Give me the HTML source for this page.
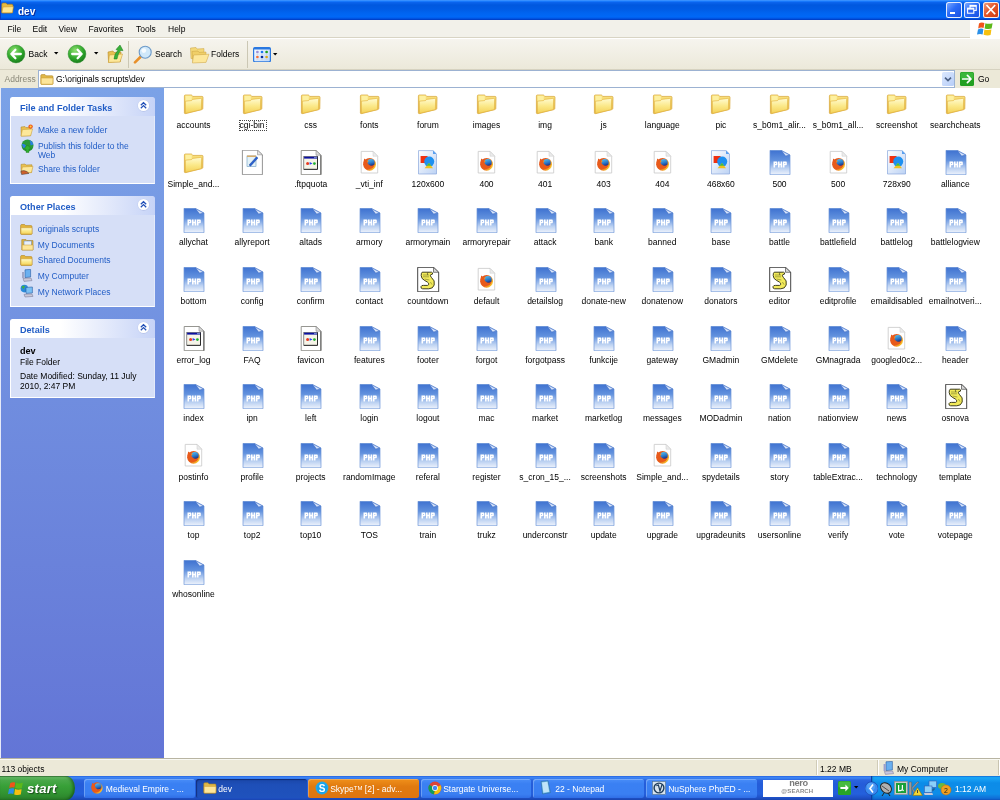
<!DOCTYPE html><html><head><meta charset="utf-8"><style>
html,body{margin:0;padding:0;width:1000px;height:800px;overflow:hidden;background:#fff;position:relative}
#w{position:absolute;left:0;top:0;width:1000px;height:800px;will-change:transform}
body{font-family:"Liberation Sans",sans-serif}
.t{position:absolute;white-space:nowrap;line-height:1}
.b{position:absolute}
</style></head><body><div id="w">
<svg width="0" height="0" style="position:absolute">
<defs>
<linearGradient id="gFold" x1="0" y1="0" x2="0" y2="1"><stop offset="0" stop-color="#fffbd2"/><stop offset="0.5" stop-color="#fbe98a"/><stop offset="1" stop-color="#f4d258"/></linearGradient>
<linearGradient id="gFoldB" x1="0" y1="0" x2="0" y2="1"><stop offset="0" stop-color="#fae480"/><stop offset="1" stop-color="#e8bc48"/></linearGradient>
<linearGradient id="gPhp" x1="0" y1="0" x2="0" y2="1"><stop offset="0" stop-color="#3f72d0"/><stop offset="0.4" stop-color="#6191de"/><stop offset="0.75" stop-color="#bdd2f2"/><stop offset="1" stop-color="#eef3fc"/></linearGradient>
<linearGradient id="gImg" x1="0" y1="0" x2="1" y2="1"><stop offset="0" stop-color="#ffffff"/><stop offset="1" stop-color="#bcd2f4"/></linearGradient>
<linearGradient id="gFfOr" x1="0" y1="0" x2="1" y2="0.6"><stop offset="0" stop-color="#e24a1c"/><stop offset="0.6" stop-color="#e8641a"/><stop offset="1" stop-color="#f8c428"/></linearGradient><linearGradient id="gFfBl" x1="0" y1="0" x2="0.3" y2="1"><stop offset="0" stop-color="#58c8f4"/><stop offset="0.6" stop-color="#2a78c8"/><stop offset="1" stop-color="#1a2e80"/></linearGradient><radialGradient id="gFf" cx="0.6" cy="0.35" r="0.7"><stop offset="0" stop-color="#3aa0e8"/><stop offset="0.45" stop-color="#2a5fb0"/><stop offset="0.5" stop-color="#f08a20"/><stop offset="1" stop-color="#d8401a"/></radialGradient>
<radialGradient id="gGreen" cx="0.4" cy="0.3" r="0.75"><stop offset="0" stop-color="#8ee070"/><stop offset="0.6" stop-color="#2ea62a"/><stop offset="1" stop-color="#17781a"/></radialGradient>

<symbol id="folder" viewBox="0 0 25 25">
 <path d="M3.4 5 Q3.4 4 4.4 4 L10 4 Q10.8 4 11.2 4.6 L11.8 5.4 L21 5.4 Q22 5.4 22 6.4 L21.8 17.6 Q21.6 18.4 20.8 18.6 L4.6 22.6 Q3.4 22.8 3.4 21.8 Z" fill="url(#gFoldB)" stroke="#d5a232" stroke-width="0.7"/>
 <path d="M4.6 4.8 L10.2 4.8 L10.8 5.8 L10.6 9.4 L4.6 10 Z" fill="#fdf0a0"/>
 <path d="M4.4 10.2 L10.6 9.6 L11.6 8.4 L19.8 7.4 Q20.6 7.4 20.6 8.2 L20.4 18 Q20.4 18.6 19.8 18.7 L5.2 22.2 Q4.4 22.4 4.4 21.6 Z" fill="url(#gFold)" stroke="#e2b23e" stroke-width="0.6"/>
</symbol>

<symbol id="php" viewBox="0 0 25 25">
 <path d="M3 0.3 L14 0.3 L23 5 L23 24.7 L3 24.7 Z" fill="url(#gPhp)" stroke="#6e96d8" stroke-width="0.7"/>
 <path d="M14.4 0.6 L22.6 5 L18.6 6 Z" fill="#d4e2fa" stroke="#3a68c0" stroke-width="0.5"/>
 <path d="M6.50 11.6 H9.60 Q10.40 11.6 10.40 12.4 V14.4 Q10.40 15.2 9.60 15.2 H8.10 V17.5 H6.50 Z M8.10 12.9 V13.9 H8.80 V12.9 Z M11.00 11.6 H12.60 V13.8 H13.60 V11.6 H15.20 V17.5 H13.60 V15.2 H12.60 V17.5 H11.00 Z M15.90 11.6 H19.00 Q19.80 11.6 19.80 12.4 V14.4 Q19.80 15.2 19.00 15.2 H17.50 V17.5 H15.90 Z M17.50 12.9 V13.9 H18.20 V12.9 Z" fill="#fff" fill-rule="evenodd"/>
</symbol>

<symbol id="ffdoc" viewBox="0 0 25 25">
 <path d="M4.2 1.4 L16 1.4 L20.7 6.2 L20.7 23 L4.2 23 Z" fill="#fff" stroke="#c8c8c8" stroke-width="0.8"/>
 <path d="M16 1.4 L16 6.2 L20.7 6.2 Z" fill="#ececec" stroke="#c8c8c8" stroke-width="0.5"/>
 <circle cx="12.6" cy="14.3" r="6.4" fill="url(#gFfOr)"/>
 <circle cx="13.9" cy="12.8" r="3.8" fill="url(#gFfBl)"/>
 <path d="M7.2 8.4 Q9 9.6 10 11.4 Q10.6 14.6 13 15.6 Q15.4 16.2 17.6 14.2 Q16.8 18.6 12.4 19 Q8.2 19 6.8 15.4 Q6 12 7.2 8.4 Z" fill="#e85a1a"/>
 <path d="M9.6 10.6 Q11 10.2 11.6 11.4 Q10.6 12 10.8 13 Z" fill="#f08a20"/>
</symbol>

<symbol id="imgdoc" viewBox="0 0 25 25">
 <path d="M3.5 0.6 L18 0.6 L21.5 4 L21.5 24 L3.5 24 Z" fill="url(#gImg)" stroke="#8aa8dc" stroke-width="0.7"/>
 <path d="M18 0.6 L18 4 L21.5 4 Z" fill="#5aa0f0"/>
 <rect x="5.6" y="6" width="7" height="7" fill="#f03010"/>
 <circle cx="14.2" cy="11.6" r="5" fill="#1e90f0"/>
 <path d="M14 13 L18 18.2 L9.6 18.2 Z" fill="#f0c020"/>
 <path d="M14 13 L16.2 15.8 L11.6 15.8 Z" fill="#40c040"/>
</symbol>

<symbol id="scriptdoc" viewBox="0 0 25 25">
 <path d="M2.7 0.3 L18.5 0.3 L23.7 5.3 L23.7 24.8 L2.7 24.8 Z" fill="#fff" stroke="#303030" stroke-width="0.9"/>
 <path d="M18.5 0.3 L18.5 5.3 L23.7 5.3 Z" fill="#d8d8d8" stroke="#303030" stroke-width="0.6"/>
 <path d="M7.2 5.2 L16.6 5.2 Q18.2 5.6 17.4 7.2 L15.8 7.6 Q14.6 8.6 16.4 10.4 Q20.4 13.6 19.2 18 Q18 21.8 13.8 21.8 L7.6 21.8 Q5.6 21.6 6 19.6 Q6.6 18.2 8.4 18.4 L12.6 18.4 Q14.2 18 13.6 16.2 Q12.8 15 9.8 13.6 Q6.2 11.8 6.2 8.6 Q6.2 5.6 7.2 5.2 Z" fill="#f2ea5a" stroke="#2a2a10" stroke-width="0.9"/>
 <path d="M8 8 L13.6 8 M8 9.8 L14 9.8 M9.6 12 L14.4 13 M15.4 15 L17 17.6" stroke="#8a8a30" stroke-width="0.7"/>
 <path d="M13 5.4 Q11.8 6.8 13 8.2" fill="none" stroke="#2a2a10" stroke-width="0.6"/>
</symbol>

<symbol id="notedoc" viewBox="0 0 25 25">
 <path d="M2.4 0.2 L17.5 0.2 L22.4 4.8 L22.4 24.7 L2.4 24.7 Z" fill="#fff" stroke="#7a7a7a" stroke-width="0.8"/>
 <path d="M17.5 0.2 L17.5 4.8 L22.4 4.8 Z" fill="#e4e4e4" stroke="#7a7a7a" stroke-width="0.5"/>
 <rect x="7" y="6" width="9" height="10.6" fill="#e4f2f8" stroke="#6a9ac0" stroke-width="0.6"/>
 <rect x="7" y="5.5" width="9" height="1.4" fill="#d8a860"/>
 <path d="M9 15 L16.5 6.8 L18 8 L10.6 16.2 Z" fill="#2860d0" stroke="#1a3c90" stroke-width="0.4"/>
</symbol>

<symbol id="windoc" viewBox="0 0 25 25">
 <path d="M3.2 0.5 L18 0.5 L22.9 5.2 L22.9 24.7 L3.2 24.7 Z" fill="#fff" stroke="#8a8a84" stroke-width="0.9"/>
 <path d="M22.9 5.2 L22.9 24.7" stroke="#505050" stroke-width="0.9"/>
 <path d="M18 0.5 L18 5.2 L22.9 5.2 Z" fill="#dcdcdc" stroke="#707070" stroke-width="0.5"/>
 <rect x="5.8" y="6.4" width="13.7" height="12.9" fill="#f6f4e8" stroke="#404040" stroke-width="0.6"/>
 <path d="M19.5 6.4 V19.3 H5.8" fill="none" stroke="#202020" stroke-width="0.9"/>
 <rect x="6.1" y="6.7" width="13.1" height="1.9" fill="#0a10a0"/>
 <rect x="16" y="7" width="3" height="1.3" fill="#7080d0"/>
 <circle cx="9.6" cy="13.4" r="1.5" fill="#e83a20"/>
 <path d="M11.6 12 L14.6 13.4 L11.6 14.8 Z" fill="#2a40f0"/>
 <circle cx="16.4" cy="13.6" r="1.4" fill="#20b030"/>
</symbol>
</defs></svg>
<div class="b" style="left:0.00px;top:0.00px;width:1000.00px;height:20.00px;background:linear-gradient(to bottom,#4a9cff 0px,#1a7dff 1.2px,#0a63ec 2.5px,#0058df 5px,#005be4 9px,#0064f0 13px,#0068f7 17px,#0052e0 18.6px,#0038bd 20px)"></div>
<div class="b" style="left:0.00px;top:0.00px;width:1.00px;height:20.00px;background:#0a3cc8"></div>
<svg class="b" style="left:1px;top:2px" width="13" height="12" viewBox="0 0 13 12"><path d="M0.8 2 Q1 1 2 1 L5 1 L6 2.2 L11 2.2 Q12 2.4 12 3.4 L11.6 10 Q11.4 11 10.4 11 L1.6 11 Q0.6 11 0.6 10 Z" fill="#e8bb40" stroke="#a07018" stroke-width="0.6"/><path d="M2 5 L12.4 4.6 L11.4 10.8 L0.9 10.8 Z" fill="#ffe690" stroke="#c89028" stroke-width="0.5"/></svg>
<div class="t" style="left:18.00px;top:6.54px;font-size:10px;color:#fff;font-weight:bold;text-shadow:1px 1px 0 #0a2a9a;">dev</div>
<div class="b" style="left:946.40px;top:1.60px;width:16.00px;height:16.00px;background:linear-gradient(135deg,#7aa8ff 0%,#2a6cf8 45%,#1a50e0 100%);border:1px solid rgba(255,255,255,0.88);border-radius:2.5px;box-sizing:border-box"></div>
<div class="b" style="left:964.30px;top:1.60px;width:16.00px;height:16.00px;background:linear-gradient(135deg,#7aa8ff 0%,#2a6cf8 45%,#1a50e0 100%);border:1px solid rgba(255,255,255,0.88);border-radius:2.5px;box-sizing:border-box"></div>
<div class="b" style="left:982.50px;top:1.60px;width:16.00px;height:16.00px;background:linear-gradient(135deg,#ef9a7c 0%,#e4582c 45%,#cc3a10 100%);border:1px solid rgba(255,255,255,0.88);border-radius:2.5px;box-sizing:border-box"></div>
<div class="b" style="left:949.80px;top:12.20px;width:5.60px;height:2.00px;background:#fff"></div>
<svg class="b" style="left:964.3px;top:1.6px" width="16" height="16" viewBox="0 0 16 16"><rect x="6" y="3.4" width="6.2" height="5" fill="none" stroke="#fff" stroke-width="1.1"/><rect x="6" y="3.4" width="6.2" height="1.4" fill="#fff"/><rect x="3.6" y="6.2" width="6.2" height="5" fill="#2a62f0" stroke="#fff" stroke-width="1.1"/><rect x="3.6" y="6.2" width="6.2" height="1.4" fill="#fff"/></svg>
<svg class="b" style="left:982.5px;top:1.6px" width="16" height="16" viewBox="0 0 16 16"><path d="M4 3.6 L11.6 11.6 M11.6 3.6 L4 11.6" stroke="#fff" stroke-width="1.6" stroke-linecap="square"/></svg>
<div class="b" style="left:0.00px;top:20.00px;width:1000.00px;height:17.50px;background:#f2f1ea;border-bottom:1px solid #d8d4c4;box-sizing:border-box"></div>
<div class="t" style="left:7.50px;top:24.50px;font-size:8.5px;color:#000;font-weight:normal;">File</div>
<div class="t" style="left:32.50px;top:24.50px;font-size:8.5px;color:#000;font-weight:normal;">Edit</div>
<div class="t" style="left:58.50px;top:24.50px;font-size:8.5px;color:#000;font-weight:normal;">View</div>
<div class="t" style="left:88.50px;top:24.50px;font-size:8.5px;color:#000;font-weight:normal;">Favorites</div>
<div class="t" style="left:136.00px;top:24.50px;font-size:8.5px;color:#000;font-weight:normal;">Tools</div>
<div class="t" style="left:168.00px;top:24.50px;font-size:8.5px;color:#000;font-weight:normal;">Help</div>
<div class="b" style="left:970.00px;top:20.00px;width:30.00px;height:17.50px;background:#fff"></div>
<svg class="b" style="left:976px;top:21px" width="18" height="16" viewBox="0 0 18 16"><path d="M3 2.5 Q5 1 8.4 2 L7.6 7 Q5 6 2.2 7.4 Z" fill="#f0541a"/><path d="M9.4 2.2 Q12 3.4 16.6 2.2 L15.6 7.6 Q12.6 8.6 8.6 7.4 Z" fill="#5cb81a"/><path d="M2 8.4 Q4.8 7 7.4 8 L6.6 13.4 Q4 12.4 1 13.6 Z" fill="#2a90e8"/><path d="M8.4 8.4 Q11.4 9.6 15.4 8.6 L14.6 14 Q11.6 15 7.6 13.8 Z" fill="#f6c010"/></svg>
<div class="b" style="left:0.00px;top:37.50px;width:1000.00px;height:32.00px;background:linear-gradient(to bottom,#f6f4ee,#ece9da);border-top:1px solid #fff;border-bottom:1px solid #d6d2c0;box-sizing:border-box"></div>
<svg class="b" style="left:6.100000000000001px;top:43.6px" width="20" height="20" viewBox="-10 -10 20 20"><circle r="8.9" fill="url(#gGreen)" stroke="#2a8a2a" stroke-width="0.5"/><path d="M-4.6 0 L4.8 0 M-0.6 -4.2 L-4.6 0 L-0.6 4.2" fill="none" stroke="#fff" stroke-width="2.3" stroke-linecap="round" stroke-linejoin="round"/></svg>
<div class="t" style="left:28.60px;top:49.80px;font-size:8.5px;color:#000;font-weight:normal;">Back</div>
<svg class="b" style="left:53.8px;top:52.4px" width="5" height="3" viewBox="0 0 5 3"><path d="M0 0 L4.4 0 L2.2 2.6 Z" fill="#000"/></svg>
<svg class="b" style="left:67.3px;top:43.6px" width="20" height="20" viewBox="-10 -10 20 20"><circle r="8.9" fill="url(#gGreen)" stroke="#2a8a2a" stroke-width="0.5"/><path d="M4.6 0 L-4.8 0 M0.6 -4.2 L4.6 0 L0.6 4.2" fill="none" stroke="#fff" stroke-width="2.3" stroke-linecap="round" stroke-linejoin="round"/></svg>
<svg class="b" style="left:93.8px;top:52.4px" width="5" height="3" viewBox="0 0 5 3"><path d="M0 0 L4.4 0 L2.2 2.6 Z" fill="#000"/></svg>
<svg class="b" style="left:107px;top:44px" width="17" height="19" viewBox="0 0 17 19"><path d="M1 8 L6 7 L7 8.5 L14 8 L13.4 17.6 L1.6 18.4 Z" fill="#e8c050" stroke="#b88a28" stroke-width="0.6"/><path d="M2.4 11 L15.6 10 L13 18 L1.4 18.4 Z" fill="#fde89a" stroke="#c89830" stroke-width="0.5"/><path d="M7 15 Q7.5 9 11 6.5 L9 5.5 L13 1 L16 6.6 L13.6 6.4 Q11 9 10 15 Z" fill="#3ab03a" stroke="#1a7a1a" stroke-width="0.5"/></svg>
<div class="b" style="left:128.00px;top:41.00px;width:1.00px;height:26.50px;background:#cbc7b4"></div>
<svg class="b" style="left:133px;top:45px" width="20" height="19" viewBox="0 0 20 19"><path d="M2 17.4 L7.4 12" stroke="#e8902a" stroke-width="2.6" stroke-linecap="round"/><circle cx="12.2" cy="7.2" r="6" fill="#cfe8fa" stroke="#6d9ac8" stroke-width="1.1"/><circle cx="10.8" cy="5.6" r="2.4" fill="#fff" opacity="0.8"/></svg>
<div class="t" style="left:155.00px;top:49.80px;font-size:8.5px;color:#000;font-weight:normal;">Search</div>
<svg class="b" style="left:189px;top:45px" width="21" height="19" viewBox="0 0 21 19"><path d="M1.5 3 L7 2.5 L8 4 L15 3.6 L14.6 13 L2 13.6 Z" fill="#f4d878" stroke="#c8a040" stroke-width="0.5"/><path d="M3 6.4 L9 6 L10 7.4 L17 7 L16.6 16.4 L4 17 Z" fill="#f0cf68" stroke="#c8a040" stroke-width="0.5"/><path d="M4.6 10 L20 9.2 L17 17.4 L3.4 18 Z" fill="#fde79a" stroke="#caa040" stroke-width="0.5"/></svg>
<div class="t" style="left:211.00px;top:49.80px;font-size:8.5px;color:#000;font-weight:normal;">Folders</div>
<div class="b" style="left:247.00px;top:41.00px;width:1.00px;height:26.50px;background:#cbc7b4"></div>
<svg class="b" style="left:253px;top:46.8px" width="18" height="15.4" viewBox="0 0 18 15.4"><defs><linearGradient id="gVw" x1="0" y1="0" x2="1" y2="1"><stop offset="0" stop-color="#fff"/><stop offset="1" stop-color="#b8d4f8"/></linearGradient></defs><rect x="0.6" y="0.6" width="16.8" height="14.2" rx="1.4" fill="url(#gVw)" stroke="#2a78e0" stroke-width="1.2"/><rect x="0.6" y="0.6" width="16.8" height="2" rx="1" fill="#2a78e0"/><circle cx="4.4" cy="5" r="1.35" fill="#9a90d8"/><circle cx="9" cy="5" r="1.35" fill="#1a78f0"/><circle cx="13.6" cy="5" r="1.35" fill="#1aa01a"/><circle cx="4.4" cy="10" r="1.35" fill="#f8703a"/><circle cx="9" cy="10" r="1.35" fill="#0a2a98"/><circle cx="13.6" cy="10" r="1.35" fill="#e0a818"/><path d="M3.4 7.2 H5.4 M8 7.2 H10 M12.6 7.2 H14.6 M3.4 12.2 H5.4 M8 12.2 H10 M12.6 12.2 H14.6" stroke="#c8c8c8" stroke-width="0.6"/></svg>
<svg class="b" style="left:273.2px;top:53.2px" width="5" height="3" viewBox="0 0 5 3"><path d="M0 0 L4.4 0 L2.2 2.6 Z" fill="#000"/></svg>
<div class="b" style="left:0.00px;top:69.50px;width:1000.00px;height:18.00px;background:#ece9d8"></div>
<div class="t" style="left:4.50px;top:75.00px;font-size:8.5px;color:#8a8878;font-weight:normal;">Address</div>
<div class="b" style="left:38.40px;top:70.30px;width:916.80px;height:17.30px;background:#fff;border:1px solid #9cb2d2;box-sizing:border-box"></div>
<svg class="b" style="left:40px;top:74px" width="14" height="11" viewBox="0 0 14 11"><path d="M0.8 1.4 Q1 0.6 1.8 0.6 L5 0.6 L6 1.8 L12.2 1.8 Q13 2 13 2.8 L13 9.8 Q12.8 10.4 12 10.4 L1.6 10.4 Q0.8 10.4 0.8 9.6 Z" fill="#e0b848" stroke="#b08828" stroke-width="0.6"/><path d="M1.2 4 L13 4 L12.8 10.2 L1.2 10.2 Z" fill="#fde69a" stroke="#c89a30" stroke-width="0.5"/></svg>
<div class="t" style="left:56.00px;top:75.20px;font-size:8.5px;color:#000;font-weight:normal;">G:\originals scrupts\dev</div>
<div class="b" style="left:942.00px;top:72.00px;width:12.00px;height:14.00px;background:linear-gradient(135deg,#dce8fe,#b6cdf8);border-radius:1.5px"></div>
<svg class="b" style="left:942px;top:72px" width="12" height="14" viewBox="0 0 12 14"><path d="M3 5.6 L6 8.6 L9 5.6" fill="none" stroke="#4d6185" stroke-width="1.6"/></svg>
<svg class="b" style="left:960px;top:72px" width="14" height="14" viewBox="0 0 14 14"><rect x="0" y="0" width="14" height="14" rx="1.5" fill="#22a022"/><rect x="0.5" y="0.5" width="13" height="6" rx="1.5" fill="#4cc44a" opacity="0.6"/><path d="M2.6 7 L11 7 M7.4 3.4 L11 7 L7.4 10.6" fill="none" stroke="#fff" stroke-width="1.7" stroke-linecap="round" stroke-linejoin="round"/></svg>
<div class="t" style="left:978.00px;top:75.20px;font-size:8.5px;color:#000;font-weight:normal;">Go</div>
<div class="b" style="left:0.00px;top:87.50px;width:164.00px;height:670.50px;background:linear-gradient(to bottom,#7ba2e7,#6375d6)"></div>
<div class="b" style="left:0.00px;top:87.50px;width:1.20px;height:670.50px;background:#e6eaf8"></div>
<div class="b" style="left:10.00px;top:97.00px;width:145.00px;height:18.70px;background:linear-gradient(to right,#fff 0%,#fff 35%,#c6d3f7 100%);border-radius:2.5px 2.5px 0 0"></div>
<div class="b" style="left:10.00px;top:115.70px;width:145.00px;height:68.30px;background:#d6dff7;border:1px solid #fff;border-right-color:rgba(255,255,255,0.35);border-top:none;box-sizing:border-box"></div>
<div class="t" style="left:20.00px;top:103.70px;font-size:9.1px;color:#215dc6;font-weight:bold;">File and Folder Tasks</div>
<svg class="b" style="left:136.9px;top:99.40px" width="13" height="13" viewBox="0 0 13 13"><circle cx="6.6" cy="6.8" r="6.1" fill="#aab8e0" opacity="0.55"/><circle cx="6.5" cy="6.5" r="5.6" fill="#fff"/><path d="M3.8 6.3 L6.5 3.7 L9.2 6.3 M3.8 9.2 L6.5 6.6 L9.2 9.2" fill="none" stroke="#2250b8" stroke-width="1.25"/></svg>
<div class="b" style="left:10.00px;top:196.00px;width:145.00px;height:19.00px;background:linear-gradient(to right,#fff 0%,#fff 35%,#c6d3f7 100%);border-radius:2.5px 2.5px 0 0"></div>
<div class="b" style="left:10.00px;top:215.00px;width:145.00px;height:92.00px;background:#d6dff7;border:1px solid #fff;border-right-color:rgba(255,255,255,0.35);border-top:none;box-sizing:border-box"></div>
<div class="t" style="left:20.00px;top:202.70px;font-size:9.1px;color:#215dc6;font-weight:bold;">Other Places</div>
<svg class="b" style="left:136.9px;top:198.40px" width="13" height="13" viewBox="0 0 13 13"><circle cx="6.6" cy="6.8" r="6.1" fill="#aab8e0" opacity="0.55"/><circle cx="6.5" cy="6.5" r="5.6" fill="#fff"/><path d="M3.8 6.3 L6.5 3.7 L9.2 6.3 M3.8 9.2 L6.5 6.6 L9.2 9.2" fill="none" stroke="#2250b8" stroke-width="1.25"/></svg>
<div class="b" style="left:10.00px;top:319.00px;width:145.00px;height:18.70px;background:linear-gradient(to right,#fff 0%,#fff 35%,#c6d3f7 100%);border-radius:2.5px 2.5px 0 0"></div>
<div class="b" style="left:10.00px;top:337.70px;width:145.00px;height:60.80px;background:#d6dff7;border:1px solid #fff;border-right-color:rgba(255,255,255,0.35);border-top:none;box-sizing:border-box"></div>
<div class="t" style="left:20.00px;top:325.70px;font-size:9.1px;color:#215dc6;font-weight:bold;">Details</div>
<svg class="b" style="left:136.9px;top:321.40px" width="13" height="13" viewBox="0 0 13 13"><circle cx="6.6" cy="6.8" r="6.1" fill="#aab8e0" opacity="0.55"/><circle cx="6.5" cy="6.5" r="5.6" fill="#fff"/><path d="M3.8 6.3 L6.5 3.7 L9.2 6.3 M3.8 9.2 L6.5 6.6 L9.2 9.2" fill="none" stroke="#2250b8" stroke-width="1.25"/></svg>
<svg class="b" style="left:20px;top:124px" width="14" height="13" viewBox="0 0 14 13"><path d="M1 3 L5 2.6 L6 3.6 L11 3.4 L10.6 11.6 L1.2 12 Z" fill="#e8c050" stroke="#a8801e" stroke-width="0.5"/><path d="M2.4 5.6 L12.6 5 L10.6 11.8 L1 12.2 Z" fill="#fde89a" stroke="#c89a30" stroke-width="0.5"/><circle cx="10.6" cy="2.6" r="2.2" fill="#f05a1a"/><circle cx="10.6" cy="2.6" r="1" fill="#ffd040"/></svg>
<div class="t" style="left:37.90px;top:126.00px;font-size:8.5px;color:#215dc6;font-weight:normal;">Make a new folder</div>
<svg class="b" style="left:20.5px;top:139px" width="13" height="14" viewBox="0 0 13 14"><circle cx="6.5" cy="6.5" r="6" fill="#2a9a3a"/><path d="M0.8 5 Q1.6 8.6 3.4 10 L5 6.6 Q3 4.4 0.8 5 Z M8.4 1 Q11.6 2 12.4 5.6 L9.6 6.4 Q9.4 3 8.4 1 Z" fill="#2a80e0"/><path d="M6.5 6 L10.5 10 L8 10 L8 13.4 L5 13.4 L5 10 L2.5 10 Z" fill="#30b030" stroke="#187018" stroke-width="0.4"/></svg>
<div class="t" style="left:37.90px;top:141.70px;font-size:8.5px;color:#215dc6;font-weight:normal;">Publish this folder to the</div>
<div class="t" style="left:37.90px;top:151.20px;font-size:8.5px;color:#215dc6;font-weight:normal;">Web</div>
<svg class="b" style="left:20px;top:162px" width="14" height="13" viewBox="0 0 14 13"><path d="M1 2.4 L5 2 L6 3 L12 2.8 L11.6 10.4 L1.2 10.8 Z" fill="#e8c050" stroke="#a8801e" stroke-width="0.5"/><path d="M2.4 5 L13 4.4 L11.4 10.6 L1 11 Z" fill="#fde89a" stroke="#c89a30" stroke-width="0.5"/><path d="M1 9 Q4 8 7 9.6 L9 11.4 L1.6 12.6 Z" fill="#d0602a" stroke="#404040" stroke-width="0.5"/></svg>
<div class="t" style="left:37.90px;top:165.10px;font-size:8.5px;color:#215dc6;font-weight:normal;">Share this folder</div>
<svg class="b" style="left:19.8px;top:224.2px" width="13" height="11" viewBox="0 0 13 11"><path d="M0.6 1.4 Q0.8 0.5 1.7 0.5 L4.6 0.5 L5.6 1.6 L11.2 1.6 Q12 1.8 12 2.6 L12 9.8 Q11.8 10.4 11 10.4 L1.4 10.4 Q0.6 10.4 0.6 9.6 Z" fill="#e2b43c" stroke="#b08424" stroke-width="0.6"/><path d="M1 3.8 L12 3.8 L12 10 L1 10 Z" fill="url(#gFold)" stroke="#c89a30" stroke-width="0.5"/></svg>
<div class="t" style="left:37.80px;top:225.40px;font-size:8.5px;color:#215dc6;font-weight:normal;">originals scrupts</div>
<svg class="b" style="left:20.5px;top:238px" width="13" height="13" viewBox="0 0 13 13"><path d="M0.8 1.6 L5 1.6 L6 2.6 L12 2.6 L12 12 L0.8 12 Z" fill="#e0b848" stroke="#a88020" stroke-width="0.6"/><rect x="3" y="3" width="7.4" height="7" fill="#e8f0fa" stroke="#5a80c0" stroke-width="0.5"/><path d="M1.2 7 L12 7 L12 12 L1.2 12 Z" fill="#fde69a" stroke="#c89a30" stroke-width="0.5"/></svg>
<div class="t" style="left:37.80px;top:241.10px;font-size:8.5px;color:#215dc6;font-weight:normal;">My Documents</div>
<svg class="b" style="left:19.8px;top:255.4px" width="13" height="11" viewBox="0 0 13 11"><path d="M0.6 1.4 Q0.8 0.5 1.7 0.5 L4.6 0.5 L5.6 1.6 L11.2 1.6 Q12 1.8 12 2.6 L12 9.8 Q11.8 10.4 11 10.4 L1.4 10.4 Q0.6 10.4 0.6 9.6 Z" fill="#e2b43c" stroke="#b08424" stroke-width="0.6"/><path d="M1 3.8 L12 3.8 L12 10 L1 10 Z" fill="url(#gFold)" stroke="#c89a30" stroke-width="0.5"/></svg>
<div class="t" style="left:37.80px;top:256.40px;font-size:8.5px;color:#215dc6;font-weight:normal;">Shared Documents</div>
<svg class="b" style="left:21px;top:268.5px" width="12" height="13" viewBox="0 0 12 13"><path d="M4 0.8 L9.6 0.4 L9.6 8 L4 8.6 Z" fill="#6ab0f0" stroke="#2a5aa0" stroke-width="0.6"/><path d="M2 9.4 L10 9 L11 11.6 L3 12.4 Z" fill="#c8c8d8" stroke="#707090" stroke-width="0.5"/><rect x="1" y="3" width="2" height="6" fill="#a0a8c8"/></svg>
<div class="t" style="left:37.80px;top:272.10px;font-size:8.5px;color:#215dc6;font-weight:normal;">My Computer</div>
<svg class="b" style="left:20px;top:284px" width="14" height="14" viewBox="0 0 14 14"><circle cx="4.4" cy="4.6" r="3.8" fill="#2a8ad8"/><path d="M1.4 3 Q3 1.4 5 2 L3.6 5 Z" fill="#40b040"/><path d="M6 3.4 L12.4 3 L12.4 9 L6 9.4 Z" fill="#7ac0f4" stroke="#2a5aa0" stroke-width="0.6"/><path d="M4 10.4 L12 10 L13 12.4 L5 13 Z" fill="#c8c8d8" stroke="#707090" stroke-width="0.5"/></svg>
<div class="t" style="left:37.80px;top:287.90px;font-size:8.5px;color:#215dc6;font-weight:normal;">My Network Places</div>
<div class="t" style="left:20.00px;top:347.40px;font-size:9.1px;color:#000;font-weight:bold;">dev</div>
<div class="t" style="left:20.00px;top:358.10px;font-size:8.5px;color:#000;font-weight:normal;">File Folder</div>
<div class="t" style="left:20.00px;top:371.60px;font-size:8.5px;color:#000;font-weight:normal;">Date Modified: Sunday, 11 July</div>
<div class="t" style="left:20.00px;top:381.60px;font-size:8.5px;color:#000;font-weight:normal;">2010, 2:47 PM</div>
<svg class="b" style="left:181.00px;top:91.20px" width="25" height="25" viewBox="0 0 25 25"><use href="#folder"/></svg>
<div class="t" style="left:133.50px;width:120px;text-align:center;top:121.10px;font-size:8.5px;color:#000;font-weight:normal;">accounts</div>
<svg class="b" style="left:239.60px;top:91.20px" width="25" height="25" viewBox="0 0 25 25"><use href="#folder"/></svg>
<div class="t" style="left:192.10px;width:120px;text-align:center;top:121.10px;font-size:8.5px;color:#000;font-weight:normal;">cgi-bin</div>
<svg class="b" style="left:298.20px;top:91.20px" width="25" height="25" viewBox="0 0 25 25"><use href="#folder"/></svg>
<div class="t" style="left:250.70px;width:120px;text-align:center;top:121.10px;font-size:8.5px;color:#000;font-weight:normal;">css</div>
<svg class="b" style="left:356.80px;top:91.20px" width="25" height="25" viewBox="0 0 25 25"><use href="#folder"/></svg>
<div class="t" style="left:309.30px;width:120px;text-align:center;top:121.10px;font-size:8.5px;color:#000;font-weight:normal;">fonts</div>
<svg class="b" style="left:415.40px;top:91.20px" width="25" height="25" viewBox="0 0 25 25"><use href="#folder"/></svg>
<div class="t" style="left:367.90px;width:120px;text-align:center;top:121.10px;font-size:8.5px;color:#000;font-weight:normal;">forum</div>
<svg class="b" style="left:474.00px;top:91.20px" width="25" height="25" viewBox="0 0 25 25"><use href="#folder"/></svg>
<div class="t" style="left:426.50px;width:120px;text-align:center;top:121.10px;font-size:8.5px;color:#000;font-weight:normal;">images</div>
<svg class="b" style="left:532.60px;top:91.20px" width="25" height="25" viewBox="0 0 25 25"><use href="#folder"/></svg>
<div class="t" style="left:485.10px;width:120px;text-align:center;top:121.10px;font-size:8.5px;color:#000;font-weight:normal;">img</div>
<svg class="b" style="left:591.20px;top:91.20px" width="25" height="25" viewBox="0 0 25 25"><use href="#folder"/></svg>
<div class="t" style="left:543.70px;width:120px;text-align:center;top:121.10px;font-size:8.5px;color:#000;font-weight:normal;">js</div>
<svg class="b" style="left:649.80px;top:91.20px" width="25" height="25" viewBox="0 0 25 25"><use href="#folder"/></svg>
<div class="t" style="left:602.30px;width:120px;text-align:center;top:121.10px;font-size:8.5px;color:#000;font-weight:normal;">language</div>
<svg class="b" style="left:708.40px;top:91.20px" width="25" height="25" viewBox="0 0 25 25"><use href="#folder"/></svg>
<div class="t" style="left:660.90px;width:120px;text-align:center;top:121.10px;font-size:8.5px;color:#000;font-weight:normal;">pic</div>
<svg class="b" style="left:767.00px;top:91.20px" width="25" height="25" viewBox="0 0 25 25"><use href="#folder"/></svg>
<div class="t" style="left:719.50px;width:120px;text-align:center;top:121.10px;font-size:8.5px;color:#000;font-weight:normal;">s_b0m1_alir...</div>
<svg class="b" style="left:825.60px;top:91.20px" width="25" height="25" viewBox="0 0 25 25"><use href="#folder"/></svg>
<div class="t" style="left:778.10px;width:120px;text-align:center;top:121.10px;font-size:8.5px;color:#000;font-weight:normal;">s_b0m1_all...</div>
<svg class="b" style="left:884.20px;top:91.20px" width="25" height="25" viewBox="0 0 25 25"><use href="#folder"/></svg>
<div class="t" style="left:836.70px;width:120px;text-align:center;top:121.10px;font-size:8.5px;color:#000;font-weight:normal;">screenshot</div>
<svg class="b" style="left:942.80px;top:91.20px" width="25" height="25" viewBox="0 0 25 25"><use href="#folder"/></svg>
<div class="t" style="left:895.30px;width:120px;text-align:center;top:121.10px;font-size:8.5px;color:#000;font-weight:normal;">searchcheats</div>
<svg class="b" style="left:181.00px;top:149.80px" width="25" height="25" viewBox="0 0 25 25"><use href="#folder"/></svg>
<div class="t" style="left:133.50px;width:120px;text-align:center;top:179.70px;font-size:8.5px;color:#000;font-weight:normal;">Simple_and...</div>
<svg class="b" style="left:239.60px;top:149.80px" width="25" height="25" viewBox="0 0 25 25"><use href="#notedoc"/></svg>
<svg class="b" style="left:298.20px;top:149.80px" width="25" height="25" viewBox="0 0 25 25"><use href="#windoc"/></svg>
<div class="t" style="left:250.70px;width:120px;text-align:center;top:179.70px;font-size:8.5px;color:#000;font-weight:normal;">.ftpquota</div>
<svg class="b" style="left:356.80px;top:149.80px" width="25" height="25" viewBox="0 0 25 25"><use href="#ffdoc"/></svg>
<div class="t" style="left:309.30px;width:120px;text-align:center;top:179.70px;font-size:8.5px;color:#000;font-weight:normal;">_vti_inf</div>
<svg class="b" style="left:415.40px;top:149.80px" width="25" height="25" viewBox="0 0 25 25"><use href="#imgdoc"/></svg>
<div class="t" style="left:367.90px;width:120px;text-align:center;top:179.70px;font-size:8.5px;color:#000;font-weight:normal;">120x600</div>
<svg class="b" style="left:474.00px;top:149.80px" width="25" height="25" viewBox="0 0 25 25"><use href="#ffdoc"/></svg>
<div class="t" style="left:426.50px;width:120px;text-align:center;top:179.70px;font-size:8.5px;color:#000;font-weight:normal;">400</div>
<svg class="b" style="left:532.60px;top:149.80px" width="25" height="25" viewBox="0 0 25 25"><use href="#ffdoc"/></svg>
<div class="t" style="left:485.10px;width:120px;text-align:center;top:179.70px;font-size:8.5px;color:#000;font-weight:normal;">401</div>
<svg class="b" style="left:591.20px;top:149.80px" width="25" height="25" viewBox="0 0 25 25"><use href="#ffdoc"/></svg>
<div class="t" style="left:543.70px;width:120px;text-align:center;top:179.70px;font-size:8.5px;color:#000;font-weight:normal;">403</div>
<svg class="b" style="left:649.80px;top:149.80px" width="25" height="25" viewBox="0 0 25 25"><use href="#ffdoc"/></svg>
<div class="t" style="left:602.30px;width:120px;text-align:center;top:179.70px;font-size:8.5px;color:#000;font-weight:normal;">404</div>
<svg class="b" style="left:708.40px;top:149.80px" width="25" height="25" viewBox="0 0 25 25"><use href="#imgdoc"/></svg>
<div class="t" style="left:660.90px;width:120px;text-align:center;top:179.70px;font-size:8.5px;color:#000;font-weight:normal;">468x60</div>
<svg class="b" style="left:767.00px;top:149.80px" width="25" height="25" viewBox="0 0 25 25"><use href="#php"/></svg>
<div class="t" style="left:719.50px;width:120px;text-align:center;top:179.70px;font-size:8.5px;color:#000;font-weight:normal;">500</div>
<svg class="b" style="left:825.60px;top:149.80px" width="25" height="25" viewBox="0 0 25 25"><use href="#ffdoc"/></svg>
<div class="t" style="left:778.10px;width:120px;text-align:center;top:179.70px;font-size:8.5px;color:#000;font-weight:normal;">500</div>
<svg class="b" style="left:884.20px;top:149.80px" width="25" height="25" viewBox="0 0 25 25"><use href="#imgdoc"/></svg>
<div class="t" style="left:836.70px;width:120px;text-align:center;top:179.70px;font-size:8.5px;color:#000;font-weight:normal;">728x90</div>
<svg class="b" style="left:942.80px;top:149.80px" width="25" height="25" viewBox="0 0 25 25"><use href="#php"/></svg>
<div class="t" style="left:895.30px;width:120px;text-align:center;top:179.70px;font-size:8.5px;color:#000;font-weight:normal;">alliance</div>
<svg class="b" style="left:181.00px;top:208.40px" width="25" height="25" viewBox="0 0 25 25"><use href="#php"/></svg>
<div class="t" style="left:133.50px;width:120px;text-align:center;top:238.30px;font-size:8.5px;color:#000;font-weight:normal;">allychat</div>
<svg class="b" style="left:239.60px;top:208.40px" width="25" height="25" viewBox="0 0 25 25"><use href="#php"/></svg>
<div class="t" style="left:192.10px;width:120px;text-align:center;top:238.30px;font-size:8.5px;color:#000;font-weight:normal;">allyreport</div>
<svg class="b" style="left:298.20px;top:208.40px" width="25" height="25" viewBox="0 0 25 25"><use href="#php"/></svg>
<div class="t" style="left:250.70px;width:120px;text-align:center;top:238.30px;font-size:8.5px;color:#000;font-weight:normal;">altads</div>
<svg class="b" style="left:356.80px;top:208.40px" width="25" height="25" viewBox="0 0 25 25"><use href="#php"/></svg>
<div class="t" style="left:309.30px;width:120px;text-align:center;top:238.30px;font-size:8.5px;color:#000;font-weight:normal;">armory</div>
<svg class="b" style="left:415.40px;top:208.40px" width="25" height="25" viewBox="0 0 25 25"><use href="#php"/></svg>
<div class="t" style="left:367.90px;width:120px;text-align:center;top:238.30px;font-size:8.5px;color:#000;font-weight:normal;">armorymain</div>
<svg class="b" style="left:474.00px;top:208.40px" width="25" height="25" viewBox="0 0 25 25"><use href="#php"/></svg>
<div class="t" style="left:426.50px;width:120px;text-align:center;top:238.30px;font-size:8.5px;color:#000;font-weight:normal;">armoryrepair</div>
<svg class="b" style="left:532.60px;top:208.40px" width="25" height="25" viewBox="0 0 25 25"><use href="#php"/></svg>
<div class="t" style="left:485.10px;width:120px;text-align:center;top:238.30px;font-size:8.5px;color:#000;font-weight:normal;">attack</div>
<svg class="b" style="left:591.20px;top:208.40px" width="25" height="25" viewBox="0 0 25 25"><use href="#php"/></svg>
<div class="t" style="left:543.70px;width:120px;text-align:center;top:238.30px;font-size:8.5px;color:#000;font-weight:normal;">bank</div>
<svg class="b" style="left:649.80px;top:208.40px" width="25" height="25" viewBox="0 0 25 25"><use href="#php"/></svg>
<div class="t" style="left:602.30px;width:120px;text-align:center;top:238.30px;font-size:8.5px;color:#000;font-weight:normal;">banned</div>
<svg class="b" style="left:708.40px;top:208.40px" width="25" height="25" viewBox="0 0 25 25"><use href="#php"/></svg>
<div class="t" style="left:660.90px;width:120px;text-align:center;top:238.30px;font-size:8.5px;color:#000;font-weight:normal;">base</div>
<svg class="b" style="left:767.00px;top:208.40px" width="25" height="25" viewBox="0 0 25 25"><use href="#php"/></svg>
<div class="t" style="left:719.50px;width:120px;text-align:center;top:238.30px;font-size:8.5px;color:#000;font-weight:normal;">battle</div>
<svg class="b" style="left:825.60px;top:208.40px" width="25" height="25" viewBox="0 0 25 25"><use href="#php"/></svg>
<div class="t" style="left:778.10px;width:120px;text-align:center;top:238.30px;font-size:8.5px;color:#000;font-weight:normal;">battlefield</div>
<svg class="b" style="left:884.20px;top:208.40px" width="25" height="25" viewBox="0 0 25 25"><use href="#php"/></svg>
<div class="t" style="left:836.70px;width:120px;text-align:center;top:238.30px;font-size:8.5px;color:#000;font-weight:normal;">battlelog</div>
<svg class="b" style="left:942.80px;top:208.40px" width="25" height="25" viewBox="0 0 25 25"><use href="#php"/></svg>
<div class="t" style="left:895.30px;width:120px;text-align:center;top:238.30px;font-size:8.5px;color:#000;font-weight:normal;">battlelogview</div>
<svg class="b" style="left:181.00px;top:267.00px" width="25" height="25" viewBox="0 0 25 25"><use href="#php"/></svg>
<div class="t" style="left:133.50px;width:120px;text-align:center;top:296.90px;font-size:8.5px;color:#000;font-weight:normal;">bottom</div>
<svg class="b" style="left:239.60px;top:267.00px" width="25" height="25" viewBox="0 0 25 25"><use href="#php"/></svg>
<div class="t" style="left:192.10px;width:120px;text-align:center;top:296.90px;font-size:8.5px;color:#000;font-weight:normal;">config</div>
<svg class="b" style="left:298.20px;top:267.00px" width="25" height="25" viewBox="0 0 25 25"><use href="#php"/></svg>
<div class="t" style="left:250.70px;width:120px;text-align:center;top:296.90px;font-size:8.5px;color:#000;font-weight:normal;">confirm</div>
<svg class="b" style="left:356.80px;top:267.00px" width="25" height="25" viewBox="0 0 25 25"><use href="#php"/></svg>
<div class="t" style="left:309.30px;width:120px;text-align:center;top:296.90px;font-size:8.5px;color:#000;font-weight:normal;">contact</div>
<svg class="b" style="left:415.40px;top:267.00px" width="25" height="25" viewBox="0 0 25 25"><use href="#scriptdoc"/></svg>
<div class="t" style="left:367.90px;width:120px;text-align:center;top:296.90px;font-size:8.5px;color:#000;font-weight:normal;">countdown</div>
<svg class="b" style="left:474.00px;top:267.00px" width="25" height="25" viewBox="0 0 25 25"><use href="#ffdoc"/></svg>
<div class="t" style="left:426.50px;width:120px;text-align:center;top:296.90px;font-size:8.5px;color:#000;font-weight:normal;">default</div>
<svg class="b" style="left:532.60px;top:267.00px" width="25" height="25" viewBox="0 0 25 25"><use href="#php"/></svg>
<div class="t" style="left:485.10px;width:120px;text-align:center;top:296.90px;font-size:8.5px;color:#000;font-weight:normal;">detailslog</div>
<svg class="b" style="left:591.20px;top:267.00px" width="25" height="25" viewBox="0 0 25 25"><use href="#php"/></svg>
<div class="t" style="left:543.70px;width:120px;text-align:center;top:296.90px;font-size:8.5px;color:#000;font-weight:normal;">donate-new</div>
<svg class="b" style="left:649.80px;top:267.00px" width="25" height="25" viewBox="0 0 25 25"><use href="#php"/></svg>
<div class="t" style="left:602.30px;width:120px;text-align:center;top:296.90px;font-size:8.5px;color:#000;font-weight:normal;">donatenow</div>
<svg class="b" style="left:708.40px;top:267.00px" width="25" height="25" viewBox="0 0 25 25"><use href="#php"/></svg>
<div class="t" style="left:660.90px;width:120px;text-align:center;top:296.90px;font-size:8.5px;color:#000;font-weight:normal;">donators</div>
<svg class="b" style="left:767.00px;top:267.00px" width="25" height="25" viewBox="0 0 25 25"><use href="#scriptdoc"/></svg>
<div class="t" style="left:719.50px;width:120px;text-align:center;top:296.90px;font-size:8.5px;color:#000;font-weight:normal;">editor</div>
<svg class="b" style="left:825.60px;top:267.00px" width="25" height="25" viewBox="0 0 25 25"><use href="#php"/></svg>
<div class="t" style="left:778.10px;width:120px;text-align:center;top:296.90px;font-size:8.5px;color:#000;font-weight:normal;">editprofile</div>
<svg class="b" style="left:884.20px;top:267.00px" width="25" height="25" viewBox="0 0 25 25"><use href="#php"/></svg>
<div class="t" style="left:836.70px;width:120px;text-align:center;top:296.90px;font-size:8.5px;color:#000;font-weight:normal;">emaildisabled</div>
<svg class="b" style="left:942.80px;top:267.00px" width="25" height="25" viewBox="0 0 25 25"><use href="#php"/></svg>
<div class="t" style="left:895.30px;width:120px;text-align:center;top:296.90px;font-size:8.5px;color:#000;font-weight:normal;">emailnotveri...</div>
<svg class="b" style="left:181.00px;top:325.60px" width="25" height="25" viewBox="0 0 25 25"><use href="#windoc"/></svg>
<div class="t" style="left:133.50px;width:120px;text-align:center;top:355.50px;font-size:8.5px;color:#000;font-weight:normal;">error_log</div>
<svg class="b" style="left:239.60px;top:325.60px" width="25" height="25" viewBox="0 0 25 25"><use href="#php"/></svg>
<div class="t" style="left:192.10px;width:120px;text-align:center;top:355.50px;font-size:8.5px;color:#000;font-weight:normal;">FAQ</div>
<svg class="b" style="left:298.20px;top:325.60px" width="25" height="25" viewBox="0 0 25 25"><use href="#windoc"/></svg>
<div class="t" style="left:250.70px;width:120px;text-align:center;top:355.50px;font-size:8.5px;color:#000;font-weight:normal;">favicon</div>
<svg class="b" style="left:356.80px;top:325.60px" width="25" height="25" viewBox="0 0 25 25"><use href="#php"/></svg>
<div class="t" style="left:309.30px;width:120px;text-align:center;top:355.50px;font-size:8.5px;color:#000;font-weight:normal;">features</div>
<svg class="b" style="left:415.40px;top:325.60px" width="25" height="25" viewBox="0 0 25 25"><use href="#php"/></svg>
<div class="t" style="left:367.90px;width:120px;text-align:center;top:355.50px;font-size:8.5px;color:#000;font-weight:normal;">footer</div>
<svg class="b" style="left:474.00px;top:325.60px" width="25" height="25" viewBox="0 0 25 25"><use href="#php"/></svg>
<div class="t" style="left:426.50px;width:120px;text-align:center;top:355.50px;font-size:8.5px;color:#000;font-weight:normal;">forgot</div>
<svg class="b" style="left:532.60px;top:325.60px" width="25" height="25" viewBox="0 0 25 25"><use href="#php"/></svg>
<div class="t" style="left:485.10px;width:120px;text-align:center;top:355.50px;font-size:8.5px;color:#000;font-weight:normal;">forgotpass</div>
<svg class="b" style="left:591.20px;top:325.60px" width="25" height="25" viewBox="0 0 25 25"><use href="#php"/></svg>
<div class="t" style="left:543.70px;width:120px;text-align:center;top:355.50px;font-size:8.5px;color:#000;font-weight:normal;">funkcije</div>
<svg class="b" style="left:649.80px;top:325.60px" width="25" height="25" viewBox="0 0 25 25"><use href="#php"/></svg>
<div class="t" style="left:602.30px;width:120px;text-align:center;top:355.50px;font-size:8.5px;color:#000;font-weight:normal;">gateway</div>
<svg class="b" style="left:708.40px;top:325.60px" width="25" height="25" viewBox="0 0 25 25"><use href="#php"/></svg>
<div class="t" style="left:660.90px;width:120px;text-align:center;top:355.50px;font-size:8.5px;color:#000;font-weight:normal;">GMadmin</div>
<svg class="b" style="left:767.00px;top:325.60px" width="25" height="25" viewBox="0 0 25 25"><use href="#php"/></svg>
<div class="t" style="left:719.50px;width:120px;text-align:center;top:355.50px;font-size:8.5px;color:#000;font-weight:normal;">GMdelete</div>
<svg class="b" style="left:825.60px;top:325.60px" width="25" height="25" viewBox="0 0 25 25"><use href="#php"/></svg>
<div class="t" style="left:778.10px;width:120px;text-align:center;top:355.50px;font-size:8.5px;color:#000;font-weight:normal;">GMnagrada</div>
<svg class="b" style="left:884.20px;top:325.60px" width="25" height="25" viewBox="0 0 25 25"><use href="#ffdoc"/></svg>
<div class="t" style="left:836.70px;width:120px;text-align:center;top:355.50px;font-size:8.5px;color:#000;font-weight:normal;">googled0c2...</div>
<svg class="b" style="left:942.80px;top:325.60px" width="25" height="25" viewBox="0 0 25 25"><use href="#php"/></svg>
<div class="t" style="left:895.30px;width:120px;text-align:center;top:355.50px;font-size:8.5px;color:#000;font-weight:normal;">header</div>
<svg class="b" style="left:181.00px;top:384.20px" width="25" height="25" viewBox="0 0 25 25"><use href="#php"/></svg>
<div class="t" style="left:133.50px;width:120px;text-align:center;top:414.10px;font-size:8.5px;color:#000;font-weight:normal;">index</div>
<svg class="b" style="left:239.60px;top:384.20px" width="25" height="25" viewBox="0 0 25 25"><use href="#php"/></svg>
<div class="t" style="left:192.10px;width:120px;text-align:center;top:414.10px;font-size:8.5px;color:#000;font-weight:normal;">ipn</div>
<svg class="b" style="left:298.20px;top:384.20px" width="25" height="25" viewBox="0 0 25 25"><use href="#php"/></svg>
<div class="t" style="left:250.70px;width:120px;text-align:center;top:414.10px;font-size:8.5px;color:#000;font-weight:normal;">left</div>
<svg class="b" style="left:356.80px;top:384.20px" width="25" height="25" viewBox="0 0 25 25"><use href="#php"/></svg>
<div class="t" style="left:309.30px;width:120px;text-align:center;top:414.10px;font-size:8.5px;color:#000;font-weight:normal;">login</div>
<svg class="b" style="left:415.40px;top:384.20px" width="25" height="25" viewBox="0 0 25 25"><use href="#php"/></svg>
<div class="t" style="left:367.90px;width:120px;text-align:center;top:414.10px;font-size:8.5px;color:#000;font-weight:normal;">logout</div>
<svg class="b" style="left:474.00px;top:384.20px" width="25" height="25" viewBox="0 0 25 25"><use href="#php"/></svg>
<div class="t" style="left:426.50px;width:120px;text-align:center;top:414.10px;font-size:8.5px;color:#000;font-weight:normal;">mac</div>
<svg class="b" style="left:532.60px;top:384.20px" width="25" height="25" viewBox="0 0 25 25"><use href="#php"/></svg>
<div class="t" style="left:485.10px;width:120px;text-align:center;top:414.10px;font-size:8.5px;color:#000;font-weight:normal;">market</div>
<svg class="b" style="left:591.20px;top:384.20px" width="25" height="25" viewBox="0 0 25 25"><use href="#php"/></svg>
<div class="t" style="left:543.70px;width:120px;text-align:center;top:414.10px;font-size:8.5px;color:#000;font-weight:normal;">marketlog</div>
<svg class="b" style="left:649.80px;top:384.20px" width="25" height="25" viewBox="0 0 25 25"><use href="#php"/></svg>
<div class="t" style="left:602.30px;width:120px;text-align:center;top:414.10px;font-size:8.5px;color:#000;font-weight:normal;">messages</div>
<svg class="b" style="left:708.40px;top:384.20px" width="25" height="25" viewBox="0 0 25 25"><use href="#php"/></svg>
<div class="t" style="left:660.90px;width:120px;text-align:center;top:414.10px;font-size:8.5px;color:#000;font-weight:normal;">MODadmin</div>
<svg class="b" style="left:767.00px;top:384.20px" width="25" height="25" viewBox="0 0 25 25"><use href="#php"/></svg>
<div class="t" style="left:719.50px;width:120px;text-align:center;top:414.10px;font-size:8.5px;color:#000;font-weight:normal;">nation</div>
<svg class="b" style="left:825.60px;top:384.20px" width="25" height="25" viewBox="0 0 25 25"><use href="#php"/></svg>
<div class="t" style="left:778.10px;width:120px;text-align:center;top:414.10px;font-size:8.5px;color:#000;font-weight:normal;">nationview</div>
<svg class="b" style="left:884.20px;top:384.20px" width="25" height="25" viewBox="0 0 25 25"><use href="#php"/></svg>
<div class="t" style="left:836.70px;width:120px;text-align:center;top:414.10px;font-size:8.5px;color:#000;font-weight:normal;">news</div>
<svg class="b" style="left:942.80px;top:384.20px" width="25" height="25" viewBox="0 0 25 25"><use href="#scriptdoc"/></svg>
<div class="t" style="left:895.30px;width:120px;text-align:center;top:414.10px;font-size:8.5px;color:#000;font-weight:normal;">osnova</div>
<svg class="b" style="left:181.00px;top:442.80px" width="25" height="25" viewBox="0 0 25 25"><use href="#ffdoc"/></svg>
<div class="t" style="left:133.50px;width:120px;text-align:center;top:472.70px;font-size:8.5px;color:#000;font-weight:normal;">postinfo</div>
<svg class="b" style="left:239.60px;top:442.80px" width="25" height="25" viewBox="0 0 25 25"><use href="#php"/></svg>
<div class="t" style="left:192.10px;width:120px;text-align:center;top:472.70px;font-size:8.5px;color:#000;font-weight:normal;">profile</div>
<svg class="b" style="left:298.20px;top:442.80px" width="25" height="25" viewBox="0 0 25 25"><use href="#php"/></svg>
<div class="t" style="left:250.70px;width:120px;text-align:center;top:472.70px;font-size:8.5px;color:#000;font-weight:normal;">projects</div>
<svg class="b" style="left:356.80px;top:442.80px" width="25" height="25" viewBox="0 0 25 25"><use href="#php"/></svg>
<div class="t" style="left:309.30px;width:120px;text-align:center;top:472.70px;font-size:8.5px;color:#000;font-weight:normal;">randomImage</div>
<svg class="b" style="left:415.40px;top:442.80px" width="25" height="25" viewBox="0 0 25 25"><use href="#php"/></svg>
<div class="t" style="left:367.90px;width:120px;text-align:center;top:472.70px;font-size:8.5px;color:#000;font-weight:normal;">referal</div>
<svg class="b" style="left:474.00px;top:442.80px" width="25" height="25" viewBox="0 0 25 25"><use href="#php"/></svg>
<div class="t" style="left:426.50px;width:120px;text-align:center;top:472.70px;font-size:8.5px;color:#000;font-weight:normal;">register</div>
<svg class="b" style="left:532.60px;top:442.80px" width="25" height="25" viewBox="0 0 25 25"><use href="#php"/></svg>
<div class="t" style="left:485.10px;width:120px;text-align:center;top:472.70px;font-size:8.5px;color:#000;font-weight:normal;">s_cron_15_...</div>
<svg class="b" style="left:591.20px;top:442.80px" width="25" height="25" viewBox="0 0 25 25"><use href="#php"/></svg>
<div class="t" style="left:543.70px;width:120px;text-align:center;top:472.70px;font-size:8.5px;color:#000;font-weight:normal;">screenshots</div>
<svg class="b" style="left:649.80px;top:442.80px" width="25" height="25" viewBox="0 0 25 25"><use href="#ffdoc"/></svg>
<div class="t" style="left:602.30px;width:120px;text-align:center;top:472.70px;font-size:8.5px;color:#000;font-weight:normal;">Simple_and...</div>
<svg class="b" style="left:708.40px;top:442.80px" width="25" height="25" viewBox="0 0 25 25"><use href="#php"/></svg>
<div class="t" style="left:660.90px;width:120px;text-align:center;top:472.70px;font-size:8.5px;color:#000;font-weight:normal;">spydetails</div>
<svg class="b" style="left:767.00px;top:442.80px" width="25" height="25" viewBox="0 0 25 25"><use href="#php"/></svg>
<div class="t" style="left:719.50px;width:120px;text-align:center;top:472.70px;font-size:8.5px;color:#000;font-weight:normal;">story</div>
<svg class="b" style="left:825.60px;top:442.80px" width="25" height="25" viewBox="0 0 25 25"><use href="#php"/></svg>
<div class="t" style="left:778.10px;width:120px;text-align:center;top:472.70px;font-size:8.5px;color:#000;font-weight:normal;">tableExtrac...</div>
<svg class="b" style="left:884.20px;top:442.80px" width="25" height="25" viewBox="0 0 25 25"><use href="#php"/></svg>
<div class="t" style="left:836.70px;width:120px;text-align:center;top:472.70px;font-size:8.5px;color:#000;font-weight:normal;">technology</div>
<svg class="b" style="left:942.80px;top:442.80px" width="25" height="25" viewBox="0 0 25 25"><use href="#php"/></svg>
<div class="t" style="left:895.30px;width:120px;text-align:center;top:472.70px;font-size:8.5px;color:#000;font-weight:normal;">template</div>
<svg class="b" style="left:181.00px;top:501.40px" width="25" height="25" viewBox="0 0 25 25"><use href="#php"/></svg>
<div class="t" style="left:133.50px;width:120px;text-align:center;top:531.30px;font-size:8.5px;color:#000;font-weight:normal;">top</div>
<svg class="b" style="left:239.60px;top:501.40px" width="25" height="25" viewBox="0 0 25 25"><use href="#php"/></svg>
<div class="t" style="left:192.10px;width:120px;text-align:center;top:531.30px;font-size:8.5px;color:#000;font-weight:normal;">top2</div>
<svg class="b" style="left:298.20px;top:501.40px" width="25" height="25" viewBox="0 0 25 25"><use href="#php"/></svg>
<div class="t" style="left:250.70px;width:120px;text-align:center;top:531.30px;font-size:8.5px;color:#000;font-weight:normal;">top10</div>
<svg class="b" style="left:356.80px;top:501.40px" width="25" height="25" viewBox="0 0 25 25"><use href="#php"/></svg>
<div class="t" style="left:309.30px;width:120px;text-align:center;top:531.30px;font-size:8.5px;color:#000;font-weight:normal;">TOS</div>
<svg class="b" style="left:415.40px;top:501.40px" width="25" height="25" viewBox="0 0 25 25"><use href="#php"/></svg>
<div class="t" style="left:367.90px;width:120px;text-align:center;top:531.30px;font-size:8.5px;color:#000;font-weight:normal;">train</div>
<svg class="b" style="left:474.00px;top:501.40px" width="25" height="25" viewBox="0 0 25 25"><use href="#php"/></svg>
<div class="t" style="left:426.50px;width:120px;text-align:center;top:531.30px;font-size:8.5px;color:#000;font-weight:normal;">trukz</div>
<svg class="b" style="left:532.60px;top:501.40px" width="25" height="25" viewBox="0 0 25 25"><use href="#php"/></svg>
<div class="t" style="left:485.10px;width:120px;text-align:center;top:531.30px;font-size:8.5px;color:#000;font-weight:normal;">underconstr</div>
<svg class="b" style="left:591.20px;top:501.40px" width="25" height="25" viewBox="0 0 25 25"><use href="#php"/></svg>
<div class="t" style="left:543.70px;width:120px;text-align:center;top:531.30px;font-size:8.5px;color:#000;font-weight:normal;">update</div>
<svg class="b" style="left:649.80px;top:501.40px" width="25" height="25" viewBox="0 0 25 25"><use href="#php"/></svg>
<div class="t" style="left:602.30px;width:120px;text-align:center;top:531.30px;font-size:8.5px;color:#000;font-weight:normal;">upgrade</div>
<svg class="b" style="left:708.40px;top:501.40px" width="25" height="25" viewBox="0 0 25 25"><use href="#php"/></svg>
<div class="t" style="left:660.90px;width:120px;text-align:center;top:531.30px;font-size:8.5px;color:#000;font-weight:normal;">upgradeunits</div>
<svg class="b" style="left:767.00px;top:501.40px" width="25" height="25" viewBox="0 0 25 25"><use href="#php"/></svg>
<div class="t" style="left:719.50px;width:120px;text-align:center;top:531.30px;font-size:8.5px;color:#000;font-weight:normal;">usersonline</div>
<svg class="b" style="left:825.60px;top:501.40px" width="25" height="25" viewBox="0 0 25 25"><use href="#php"/></svg>
<div class="t" style="left:778.10px;width:120px;text-align:center;top:531.30px;font-size:8.5px;color:#000;font-weight:normal;">verify</div>
<svg class="b" style="left:884.20px;top:501.40px" width="25" height="25" viewBox="0 0 25 25"><use href="#php"/></svg>
<div class="t" style="left:836.70px;width:120px;text-align:center;top:531.30px;font-size:8.5px;color:#000;font-weight:normal;">vote</div>
<svg class="b" style="left:942.80px;top:501.40px" width="25" height="25" viewBox="0 0 25 25"><use href="#php"/></svg>
<div class="t" style="left:895.30px;width:120px;text-align:center;top:531.30px;font-size:8.5px;color:#000;font-weight:normal;">votepage</div>
<svg class="b" style="left:181.00px;top:560.00px" width="25" height="25" viewBox="0 0 25 25"><use href="#php"/></svg>
<div class="t" style="left:133.50px;width:120px;text-align:center;top:589.90px;font-size:8.5px;color:#000;font-weight:normal;">whosonline</div>
<div class="b" style="left:239.30px;top:119.50px;width:27.70px;height:11.80px;border:1px dotted #444;box-sizing:border-box"></div>
<div class="b" style="left:0.00px;top:758.00px;width:1000.00px;height:18.00px;background:#ece9d8;border-top:1px solid #b8b4a2;box-sizing:border-box"></div>
<div class="b" style="left:0.00px;top:759.00px;width:1000.00px;height:1.00px;background:#fff;opacity:0.7"></div>
<div class="t" style="left:1.60px;top:764.80px;font-size:8.5px;color:#000;font-weight:normal;">113 objects</div>
<div class="b" style="left:815.60px;top:760.00px;width:1.00px;height:15.00px;background:#d0ccb8;border-right:1px solid #fff"></div>
<div class="b" style="left:876.80px;top:760.00px;width:1.00px;height:15.00px;background:#d0ccb8;border-right:1px solid #fff"></div>
<div class="t" style="left:820.00px;top:764.80px;font-size:8.5px;color:#000;font-weight:normal;">1.22 MB</div>
<svg class="b" style="left:882.5px;top:760.5px" width="11" height="14" viewBox="0 0 11 14"><path d="M3 0.8 L9.4 0.4 L9.4 9 L3 9.6 Z" fill="#6ab0f0" stroke="#2a5aa0" stroke-width="0.6"/><path d="M1.4 10.4 L9.6 10 L10.6 12.6 L2.4 13.4 Z" fill="#c8c8e0" stroke="#707090" stroke-width="0.5"/><rect x="0.6" y="3" width="2" height="7" fill="#9aa0d0"/></svg>
<div class="t" style="left:897.00px;top:764.80px;font-size:8.5px;color:#000;font-weight:normal;">My Computer</div>
<div class="b" style="left:998.00px;top:760.00px;width:1.00px;height:15.00px;background:#c8c4b0;border-right:1px solid #fff"></div>
<div class="b" style="left:0.00px;top:776.00px;width:1000.00px;height:24.00px;background:linear-gradient(to bottom,#1f55d8 0px,#3c86f6 1px,#3a7ff0 2.4px,#2a64de 4px,#245cd9 8px,#2460dc 18px,#1e4fc4 22px,#1a45b0 24px)"></div>
<div class="b" style="left:0;top:776px;width:75.4px;height:24px;border-radius:0 9px 9px 0 / 0 12px 12px 0;background:linear-gradient(to bottom,#3a7a3a 0px,#62ba62 1.5px,#4aa84a 4px,#38a038 10px,#329432 17px,#2a802a 24px);box-shadow:inset -2px 0 3px rgba(0,40,0,0.45)"></div>
<svg class="b" style="left:7px;top:780.5px" width="17" height="16" viewBox="0 0 17 16"><path d="M3.2 2.2 Q5.4 0.8 8.2 1.6 L7.4 6.6 Q4.6 5.8 2.2 7 Z" fill="#f0541a"/><path d="M9 1.8 Q11.6 3 15.8 1.8 L14.8 7.2 Q11.8 8.2 8.2 7 Z" fill="#5cb81a"/><path d="M2 8 Q4.6 6.6 7.2 7.6 L6.4 13 Q3.8 12 1 13.2 Z" fill="#2a90e8"/><path d="M8 8 Q11 9.2 14.6 8.2 L13.8 13.6 Q10.8 14.6 7.2 13.4 Z" fill="#f6c010"/></svg>
<div class="t" style="left:27.00px;top:782.43px;font-size:13.2px;color:#fff;font-weight:bold;font-style:italic;text-shadow:1px 1px 1px #1a4a1a;letter-spacing:0.2px">start</div>
<div class="b" style="left:83.6px;top:779.4px;width:111.4px;height:18.4px;border-radius:2.5px;background:linear-gradient(to bottom,#4a8ef8 0%,#3a80f3 25%,#3a7ff2 80%,#306ee6 100%);box-shadow:inset 1px 1px 0 rgba(255,255,255,0.25)"></div>
<div class="t" style="left:105.80px;top:784.60px;font-size:8.5px;color:#fff;font-weight:normal;">Medieval Empire - ...</div>
<div class="b" style="left:196px;top:779.4px;width:111.39999999999998px;height:18.4px;border-radius:2.5px;background:linear-gradient(to bottom,#1a46a8,#1e4fb8 30%,#1f52bd);box-shadow:inset 1px 1px 1px rgba(0,0,40,0.4)"></div>
<div class="t" style="left:218.20px;top:784.60px;font-size:8.5px;color:#fff;font-weight:normal;">dev</div>
<div class="b" style="left:308px;top:779.4px;width:111.19999999999999px;height:18.4px;border-radius:2.5px;background:linear-gradient(to bottom,#f0901a,#e07a10 40%,#de7510);box-shadow:inset 1px 1px 0 rgba(255,255,255,0.25)"></div>
<div class="t" style="left:330.20px;top:784.60px;font-size:8.5px;color:#fff;font-weight:normal;">Skype<span style="font-size:6px;position:relative;top:-2px">TM</span> [2] - adv...</div>
<div class="b" style="left:421px;top:779.4px;width:110.20000000000005px;height:18.4px;border-radius:2.5px;background:linear-gradient(to bottom,#4a8ef8 0%,#3a80f3 25%,#3a7ff2 80%,#306ee6 100%);box-shadow:inset 1px 1px 0 rgba(255,255,255,0.25)"></div>
<div class="t" style="left:443.20px;top:784.60px;font-size:8.5px;color:#fff;font-weight:normal;">Stargate Universe...</div>
<div class="b" style="left:533px;top:779.4px;width:111px;height:18.4px;border-radius:2.5px;background:linear-gradient(to bottom,#4a8ef8 0%,#3a80f3 25%,#3a7ff2 80%,#306ee6 100%);box-shadow:inset 1px 1px 0 rgba(255,255,255,0.25)"></div>
<div class="t" style="left:555.20px;top:784.60px;font-size:8.5px;color:#fff;font-weight:normal;">22 - Notepad</div>
<div class="b" style="left:646px;top:779.4px;width:111px;height:18.4px;border-radius:2.5px;background:linear-gradient(to bottom,#4a8ef8 0%,#3a80f3 25%,#3a7ff2 80%,#306ee6 100%);box-shadow:inset 1px 1px 0 rgba(255,255,255,0.25)"></div>
<div class="t" style="left:668.20px;top:784.60px;font-size:8.5px;color:#fff;font-weight:normal;">NuSphere PhpED - ...</div>
<svg class="b" style="left:90.8px;top:782.4px" width="12" height="12" viewBox="5.8 7.5 13.6 13.6"><circle cx="12.6" cy="14.3" r="6.4" fill="url(#gFfOr)"/><circle cx="13.9" cy="12.8" r="3.8" fill="url(#gFfBl)"/><path d="M7.2 8.4 Q9 9.6 10 11.4 Q10.6 14.6 13 15.6 Q15.4 16.2 17.6 14.2 Q16.8 18.6 12.4 19 Q8.2 19 6.8 15.4 Q6 12 7.2 8.4 Z" fill="#e85a1a"/></svg>
<svg class="b" style="left:202.5px;top:781.5px" width="14" height="12" viewBox="0 0 14 12"><path d="M0.8 1.6 Q1 0.8 1.8 0.8 L5 0.8 L6 2 L12.2 2 Q13 2.2 13 3 L13 10.6 Q12.8 11.2 12 11.2 L1.6 11.2 Q0.8 11.2 0.8 10.4 Z" fill="#e0b848" stroke="#a88020" stroke-width="0.6"/><path d="M1.2 4.4 L13 4.4 L12.8 11 L1.2 11 Z" fill="#fde69a" stroke="#c89a30" stroke-width="0.5"/></svg>
<svg class="b" style="left:314.5px;top:780.5px" width="14" height="14" viewBox="0 0 14 14"><circle cx="7" cy="7" r="6.4" fill="#22a8e8"/><circle cx="7" cy="7" r="5" fill="#18a0e8"/><text x="7" y="10.8" text-anchor="middle" font-family="Liberation Sans" font-weight="bold" font-size="10" fill="#fff">S</text></svg>
<svg class="b" style="left:427.5px;top:780.5px" width="14" height="14" viewBox="0 0 14 14"><circle cx="7" cy="7" r="6.4" fill="#db4437"/><path d="M7 7 L12.6 4.2 A6.4 6.4 0 0 1 6 13.3 Z" fill="#f4c20d"/><path d="M7 7 L6 13.3 A6.4 6.4 0 0 1 1.2 3.8 Z" fill="#0f9d58"/><circle cx="7" cy="7" r="2.9" fill="#fff"/><circle cx="7" cy="7" r="2.2" fill="#4285f4"/></svg>
<svg class="b" style="left:539px;top:780px" width="13" height="15" viewBox="0 0 13 15"><path d="M2 1.5 L9 0.8 L11.4 12.6 L3.6 14 Z" fill="#6ab8e8" stroke="#2a6a9a" stroke-width="0.6"/><path d="M3 2.4 L8.4 1.8 L10.2 11.8 L4.4 12.8 Z" fill="#bfe4f8"/></svg>
<svg class="b" style="left:652px;top:780.5px" width="14" height="14" viewBox="0 0 14 14"><rect x="0.4" y="0.4" width="13.2" height="13.2" fill="#d8e4ee" stroke="#4a6a8a" stroke-width="0.6"/><circle cx="7" cy="7" r="5.6" fill="#1e3c5a"/><circle cx="7" cy="7" r="4.2" fill="#d8e4ee"/><path d="M4.4 4.6 L6.4 4 L8 10 L10 3.6" fill="none" stroke="#1e3c5a" stroke-width="1.2"/></svg>
<div class="b" style="left:762.50px;top:779.80px;width:70.50px;height:16.80px;background:#fff"></div>
<div class="t" style="left:738.50px;width:120px;text-align:center;top:779.21px;font-size:9.2px;color:#7a7a7a;font-weight:bold;letter-spacing:-0.4px">nero</div>
<div class="t" style="left:737.30px;width:120px;text-align:center;top:787.92px;font-size:6.0px;color:#8a8a8a;font-weight:bold;letter-spacing:0.1px">@SEARCH</div>
<svg class="b" style="left:837.5px;top:780.5px" width="13" height="14" viewBox="0 0 13 14"><rect x="0" y="0" width="13" height="14" rx="1.5" fill="#28a428"/><rect x="0.5" y="0.5" width="12" height="6" rx="1.5" fill="#5ccc50" opacity="0.6"/><path d="M2.4 6 L7.4 6 L7.4 3.4 L10.8 7 L7.4 10.6 L7.4 8 L2.4 8 Z" fill="#fff"/></svg>
<svg class="b" style="left:854px;top:786.2px" width="5" height="3" viewBox="0 0 5 3"><path d="M0 0 L4.4 0 L2.2 2.6 Z" fill="#000"/></svg>
<div class="b" style="left:871.20px;top:776.00px;width:128.80px;height:24.00px;background:linear-gradient(to bottom,#1a6ae8 0px,#16a8f8 1px,#18a0f4 3px,#0c8ce8 7px,#0e8de8 18px,#1070d8 22px,#1060d0 24px);box-shadow:inset 1px 0 1px #0a3aa0, inset 2px 0 2px rgba(0,0,0,0.15)"></div>
<svg class="b" style="left:865px;top:780px" width="13" height="17" viewBox="0 0 13 17"><circle cx="6.5" cy="8.5" r="6.6" fill="#3a8af0" stroke="#1a3aa0" stroke-width="0.6"/><circle cx="6" cy="6.6" r="4" fill="#6ab4fa" opacity="0.5"/><path d="M8 4.6 L5 8.5 L8 12.4" fill="none" stroke="#fff" stroke-width="1.6"/></svg>
<svg class="b" style="left:879px;top:779.5px" width="14" height="17" viewBox="0 0 14 17"><ellipse cx="7" cy="8" rx="6" ry="4.6" transform="rotate(40 7 8)" fill="#b0b0b0" stroke="#222" stroke-width="1"/><path d="M3 6 L10 11" stroke="#333" stroke-width="0.8"/><path d="M5 13 L3 16 M9 13 L11 16" stroke="#222" stroke-width="1"/></svg>
<svg class="b" style="left:893.5px;top:781px" width="14" height="14" viewBox="0 0 14 14"><rect x="0.4" y="0.4" width="13.2" height="13.2" fill="#c8c8c8" stroke="#888" stroke-width="0.6"/><rect x="2" y="2" width="10" height="10" fill="#1aa03a"/><path d="M4.6 4 L4.6 10.6 M4.6 8.6 Q4.8 9.8 6.4 9.6 Q8.4 9.4 8.4 7.4 L8.4 4 M8.4 8.6 L9.6 9.8" fill="none" stroke="#fff" stroke-width="1.2"/></svg>
<svg class="b" style="left:908px;top:780.5px" width="15" height="15" viewBox="0 0 15 15"><path d="M1 1 L3.6 1 L3.6 14 L1 14 Z M3.6 7 L9 1 L11 1 L5 7.6 L9 14 L6.6 14 Z" fill="#9a9a9a" stroke="#555" stroke-width="0.4"/><path d="M9.5 6.6 L14.4 14.4 L4.8 14.4 Z" fill="#f6d830" stroke="#806000" stroke-width="0.5"/><rect x="9.1" y="9" width="0.9" height="3" fill="#333"/></svg>
<svg class="b" style="left:923px;top:779.5px" width="15" height="16" viewBox="0 0 15 16"><rect x="6" y="1" width="7.6" height="6.4" fill="#8ad0fa" stroke="#3a5ab0" stroke-width="0.6"/><rect x="1.4" y="6" width="7.6" height="6.4" fill="#8ad0fa" stroke="#3a5ab0" stroke-width="0.6"/><path d="M1 13 L9.4 13 L10 15 L1.6 15 Z" fill="#c8c8d8"/><path d="M9 10 L11 10 L11 8" stroke="#333" stroke-width="0.6" fill="none"/></svg>
<svg class="b" style="left:937px;top:781px" width="16" height="15" viewBox="0 0 16 15"><ellipse cx="5" cy="5" rx="4" ry="3" fill="#6ab840"/><circle cx="9" cy="9" r="5" fill="#f0a020" stroke="#c06a10" stroke-width="0.5"/><text x="9" y="11.6" text-anchor="middle" font-family="Liberation Sans" font-size="7" fill="#222">2</text></svg>
<div class="t" style="left:955.00px;top:785.00px;font-size:8.5px;color:#fff;font-weight:normal;">1:12 AM</div>
</div></body></html>
